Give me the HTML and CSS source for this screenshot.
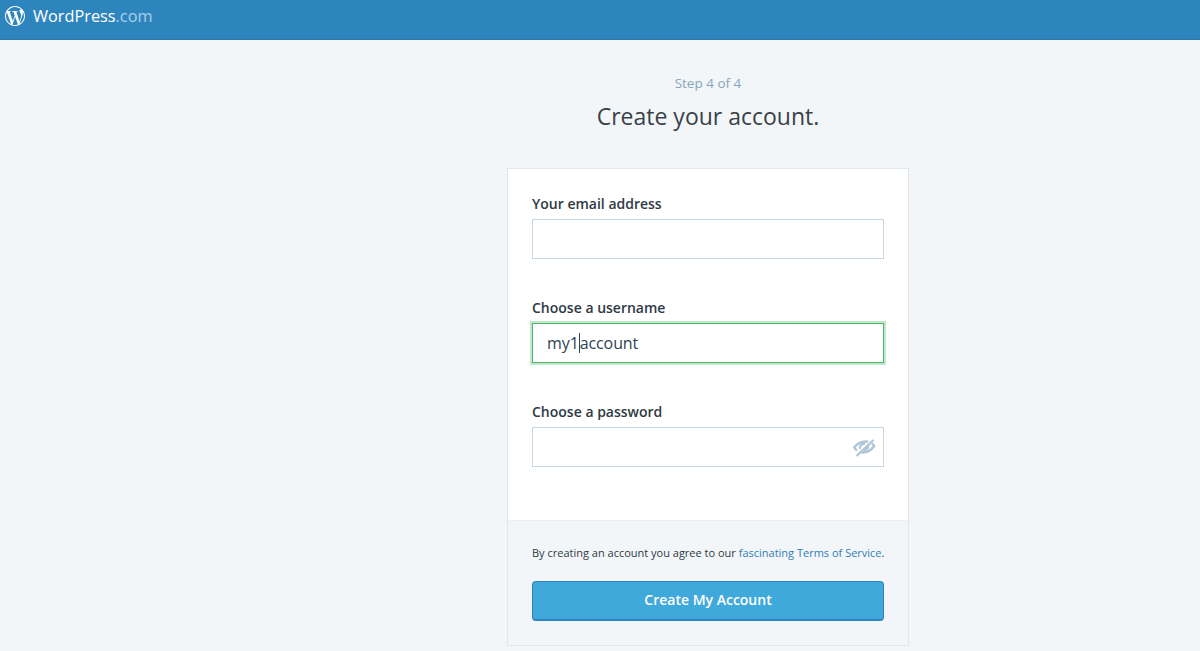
FILE: index.html
```html
<!DOCTYPE html>
<html lang="en">
<head>
  <meta charset="UTF-8">
  <title>Create your account</title>
  <link rel="stylesheet" href="styles.css">
</head>
<body>
<header class="masterbar">
  <svg class="logo" viewBox="0 0 24 24" width="20" height="20">
    <path fill="#fff" d="M12 0C5.4 0 0 5.4 0 12s5.4 12 12 12 12-5.4 12-12S18.600 0 12 0zM1.200 12c0-1.600.3-3 .9-4.400l5.200 14.100C3.700 19.900 1.200 16.300 1.200 12zM12 22.800c-1.100 0-2.100-.2-3-.4l3.200-9.400 3.300 9.100c0 .1 0 .1.100.1-1.200.4-2.400.6-3.600.6zm1.500-15.900c.6 0 1.200-.1 1.200-.1.600-.1.500-.9-.1-.9 0 0-1.700.1-2.800.1-1 0-2.700-.1-2.700-.1-.6 0-.7.900-.1.900 0 0 .5.100 1.100.1l1.600 4.400-2.300 6.800-3.800-11.200c.6 0 1.200-.1 1.200-.1.600-.1.500-.9-.1-.9 0 0-1.700.1-2.800.1h-.7C5.100 3.600 8.300 1.200 12 1.200c2.800 0 5.400 1.100 7.300 2.800h-.1c-1 0-1.800.9-1.800 1.900 0 .9.500 1.600 1.100 2.500.4.700.9 1.600.9 3 0 .9-.4 2-.8 3.500l-1.100 3.600-3.900-11.600zm3.900 14.500l3.300-9.500c.6-1.500.8-2.800.8-3.900 0-.4 0-.8-.1-1.100.9 1.500 1.400 3.300 1.400 5.100 0 4-2.200 7.500-5.400 9.400z"/>
  </svg>
  <span class="brand">WordPress<span class="brand-tld">.com</span></span>
</header>

<main class="content">
  <p class="step">Step 4 of 4</p>
  <h1 class="title">Create your account.</h1>

  <form class="card">
    <div class="fields">
      <div class="field">
        <label class="label">Your email address</label>
        <div class="input"></div>
      </div>
      <div class="field">
        <label class="label">Choose a username</label>
        <div class="input input-focus">my1<span class="caret"></span>account</div>
      </div>
      <div class="field">
        <label class="label">Choose a password</label>
        <div class="input input-password">
          <svg class="eye" viewBox="0 0 24 24" width="24" height="24">
            <g fill="none" stroke="#aec5d6" stroke-width="2.300">
              <path d="M5 15.500C3.800 14.500 2.800 13.300 2.300 12.200 5 8.800 9.500 6.500 14 6.500c.8 0 1.500.1 2.200.2"/>
              <path d="M19.800 8.500c1 .7 1.800 1.500 2.400 2.500-2.500 3.600-7 6.500-11.500 6.500-1 0-1.800-.1-2.600-.3"/>
              <path d="M8.200 13.800c-.9-2.500 1-5.200 4.800-5.300"/>
              <path d="M16 10.500c.3 2.400-1.400 4.300-4 4.700"/>
              <path d="M4.500 21L21.500 5"/>
            </g>
          </svg>
        </div>
      </div>
    </div>
    <div class="card-footer">
      <p class="terms">By creating an account you agree to our <a href="#">fascinating Terms of Service</a>.</p>
      <button type="button" class="button">Create My Account</button>
    </div>
  </form>
</main>
</body>
</html>
```

FILE: styles.css
```css
html, body {
    height: 100%;
    margin: 0;
    padding: 0;
    overflow: hidden;
}

body {
    background: #f3f6f8;
    color: #2e3a44;
    font-family: "Open Sans", "Noto Sans", sans-serif;
}

.masterbar {
    height: 39px;
    padding-left: 5px;
    display: flex;
    align-items: flex-start;
    background: #2e85be;
    border-bottom: 1px solid #2a77aa;
}

.logo {
    margin-top: 6px;
}

.brand {
    margin-left: 8px;
    color: #fff;
    font-size: 16.3px;
    line-height: 33px;
}

.brand-tld {
    color: #a8d0ea;
}

/* the column is centred in the space right of an empty 216px sidebar */
.content {
    padding-left: 216px;
    display: flex;
    flex-direction: column;
    align-items: center;
}

.step {
    margin: 34px 0 0;
    color: #87a6bc;
    font-size: 13.5px;
    line-height: 19px;
}

.title {
    margin: 8px 0 0;
    color: #3a4148;
    font-size: 23px;
    font-weight: 400;
    line-height: 31px;
}

.card {
    width: 400px;
    margin-top: 36px;
    background: #fff;
    border: 1px solid #e1e8ee;
}

.fields {
    padding: 25px 24px 53px;
    display: flex;
    flex-direction: column;
    gap: 39px;
}

.label {
    display: block;
    margin-bottom: 5px;
    color: #2e3a44;
    font-size: 14px;
    font-weight: 600;
    line-height: 20px;
}

.input {
    box-sizing: border-box;
    height: 40px;
    padding: 0 14px;
    display: flex;
    align-items: center;
    background: #fff;
    border: 1px solid #c8d7e1;
    font-size: 16px;
}

.input-focus {
    border-color: #4ab866;
    box-shadow: 0 0 0 2px #c5e6cd;
    color: #2e4453;
    letter-spacing: -.1px;
}

.input-password {
    justify-content: flex-end;
    padding-right: 7px;
}

.caret {
    width: 1px;
    height: 20px;
    background: #2e4453;
}

.card-footer {
    padding: 24px 24px 24px;
    background: #f3f6f8;
    border-top: 1px solid #e9eff3;
}

.terms {
    margin: 0 0 20px;
    font-size: 11px;
    line-height: 16px;
    white-space: nowrap;
}

.terms a {
    color: #2e7fb5;
    text-decoration: none;
}

.button {
    display: block;
    box-sizing: border-box;
    width: 100%;
    height: 40px;
    padding: 0 0 2px;
    background: #3fa9dc;
    border: 1px solid #2e85be;
    border-width: 1px 1px 2px;
    border-radius: 4px;
    color: #fff;
    font-family: inherit;
    font-size: 14px;
    font-weight: 600;
}
```
